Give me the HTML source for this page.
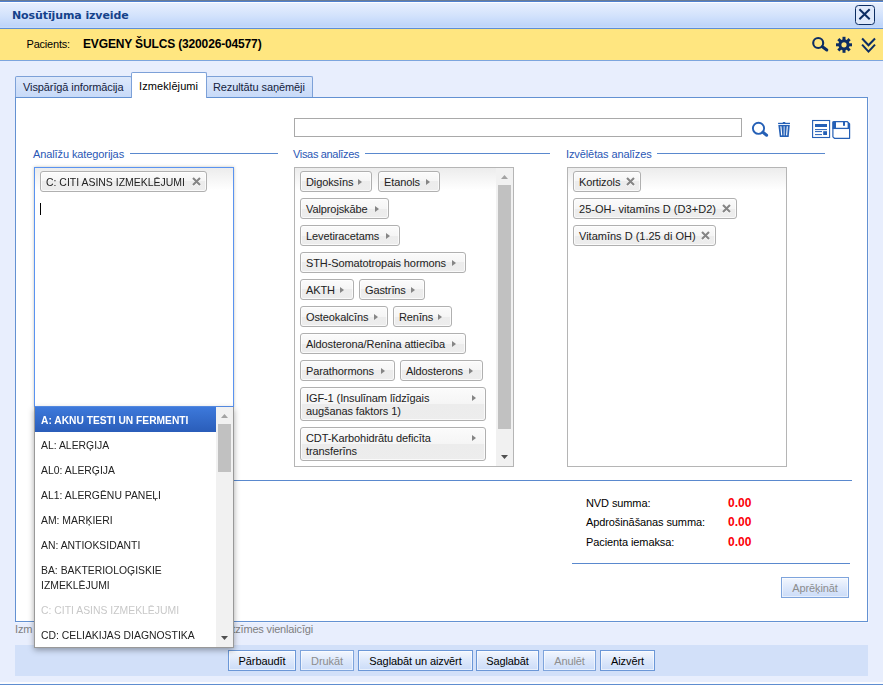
<!DOCTYPE html>
<html lang="lv">
<head>
<meta charset="utf-8">
<title>Nosūtījuma izveide</title>
<style>
*{box-sizing:border-box;margin:0;padding:0}
html,body{width:883px;height:685px;overflow:hidden}
body{position:relative;background:#e8eefd;font-family:"Liberation Sans",sans-serif;font-size:11px;color:#000;line-height:13px;letter-spacing:-0.1px}
.abs{position:absolute}
#topstrip{left:0;top:0;width:883px;height:2px;background:linear-gradient(#6a7b93 0,#6a7b93 50%,#4f80cf 50%,#4f80cf 100%)}
#titlebar{left:0;top:2px;width:883px;height:26px;background:linear-gradient(#fdfeff 0,#fdfeff 1px,#e7effe 1px,#d4e3fc 50%,#bed5fa 24px,#c9dcfb 26px)}
#titleline{left:0;top:28px;width:883px;height:1px;background:#5e8fd6}
#title{left:12px;top:9px;font-family:"DejaVu Sans","Liberation Sans",sans-serif;font-weight:bold;font-size:11px;color:#15428b;white-space:nowrap}
#closebtn{left:855px;top:5px;width:20px;height:20px;border:1.5px solid #0c2d63;border-radius:3.5px;background:#dfe9fb}
#patbar{left:0;top:29px;width:883px;height:31px;background:#ffe680}
#patline{left:0;top:60px;width:883px;height:1px;background:#7da5dd}
#patlabel{left:26.5px;top:38px;white-space:nowrap;letter-spacing:-0.2px}
#patname{left:83px;top:38px;font-weight:bold;font-size:12px;white-space:nowrap;letter-spacing:-0.15px}
.tab{position:absolute;top:76px;height:22px;border:1px solid #7da1d8;border-bottom:none;background:linear-gradient(#dde8fb,#c6d9f8);border-radius:2px 2px 0 0;white-space:nowrap;color:#15223d;padding:4px 0 0 7px}
.tab.active{top:72px;height:26px;background:#fff;color:#000;z-index:3;padding-top:7px;letter-spacing:.1px}
#tabbody{left:15px;top:97px;width:853px;height:525px;background:#fff;border:1px solid #6391d2;box-shadow:1px 1px 0 #f1f5fe}
.legend{position:absolute;color:#2a57b5;white-space:nowrap;font-size:11px}
.fline{position:absolute;height:1px;background:#5a89ce}
.box{position:absolute;background:linear-gradient(#ececec 0,#fff 22px);border:1px solid #b5b5b5}
.chip{position:absolute;height:21px;border:1px solid #b0b0b0;border-radius:3px;background:linear-gradient(#fbfbfb 0,#f5f5f5 50%,#ececec 50%,#ededed 100%);box-shadow:inset 0 0 0 1px rgba(255,255,255,.7);white-space:nowrap;padding:4px 0 0 5px;color:#222;font-size:11px}
.chip.tall{height:34px;white-space:normal}
.arr{position:absolute;width:0;height:0;border-left:4px solid #858585;border-top:3.5px solid transparent;border-bottom:3.5px solid transparent}
.x{position:absolute;width:9px;height:9px;top:5px;filter:drop-shadow(0 1px 0 rgba(255,255,255,.9))}
.btn{position:absolute;top:650px;height:21px;border:1px solid #6b97d7;background:linear-gradient(#f3f7fe,#dde8fb 50%,#cbdcf8);box-shadow:inset 0 0 0 1px rgba(255,255,255,.55);white-space:nowrap;text-align:center;padding-top:4px;color:#000}
.btn.dis{color:#8d8d8d;border-color:#7ea4dc}
.item{position:absolute;left:41px;white-space:nowrap;color:#222;letter-spacing:0;transform:scaleX(.945);transform-origin:0 0}
.sum{position:absolute;left:586px;white-space:nowrap}
.val{position:absolute;left:728px;color:#fb0007;font-weight:bold;font-size:12px;white-space:nowrap;letter-spacing:0}
</style>
</head>
<body>
<div id="topstrip" class="abs"></div>
<div id="titlebar" class="abs"></div>
<div id="titleline" class="abs"></div>
<div id="title" class="abs">Nosūtījuma izveide</div>
<div id="closebtn" class="abs">
<svg width="17" height="17" viewBox="0 0 17 17" style="position:absolute;left:0;top:0"><path d="M3.4 3.2 L13.7 13.3 M13.7 3.2 L3.4 13.3" stroke="#0c2d63" stroke-width="2" fill="none"/></svg>
</div>
<div id="patbar" class="abs"></div>
<div id="patline" class="abs"></div>
<svg class="abs" style="left:808px;top:34px" width="24" height="20" viewBox="0 0 24 20"><circle cx="10.2" cy="9" r="5" fill="none" stroke="#0c2d63" stroke-width="2.1"/><path d="M14.4 12.7 L18.8 16" stroke="#0c2d63" stroke-width="3" stroke-linecap="round"/></svg>
<svg class="abs" style="left:834px;top:35px" width="20" height="20" viewBox="-10 -9.8 20 20"><g fill="#0c2d63"><rect x="-1.5" y="-8" width="3" height="3.4" transform="rotate(0)"/><rect x="-1.5" y="-8" width="3" height="3.4" transform="rotate(45)"/><rect x="-1.5" y="-8" width="3" height="3.4" transform="rotate(90)"/><rect x="-1.5" y="-8" width="3" height="3.4" transform="rotate(135)"/><rect x="-1.5" y="-8" width="3" height="3.4" transform="rotate(180)"/><rect x="-1.5" y="-8" width="3" height="3.4" transform="rotate(225)"/><rect x="-1.5" y="-8" width="3" height="3.4" transform="rotate(270)"/><rect x="-1.5" y="-8" width="3" height="3.4" transform="rotate(315)"/></g><circle cx="0" cy="0" r="4.1" fill="none" stroke="#0c2d63" stroke-width="3"/></svg>
<svg class="abs" style="left:860px;top:36px" width="18" height="18" viewBox="0 0 18 18"><path d="M2.1 2.5 L8.5 9.3 L15 2.5 M2.1 8.6 L8.5 15.6 L15 8.6" fill="none" stroke="#0c2d63" stroke-width="2"/></svg>
<div id="patlabel" class="abs">Pacients:</div>
<div id="patname" class="abs">EVGENY ŠULCS (320026-04577)</div>

<div class="tab" style="left:15px;width:117px">Vispārīgā informācija</div>
<div class="tab active" style="left:131px;width:76px">Izmeklējumi</div>
<div class="tab" style="left:206px;width:107px;padding-left:6px">Rezultātu saņēmēji</div>
<div id="tabbody" class="abs"></div>

<!-- search row -->
<div class="abs" style="left:294px;top:118px;width:448px;height:19px;border:1px solid #a9a9a9;background:#fff"></div>
<svg class="abs" style="left:751px;top:120px" width="19" height="19" viewBox="0 0 19 19"><circle cx="7.5" cy="8.3" r="5.6" fill="none" stroke="#2560b6" stroke-width="1.9"/><path d="M11.9 12.3 L15.6 15.2" stroke="#2560b6" stroke-width="3" stroke-linecap="round"/></svg>
<svg class="abs" style="left:777px;top:120px" width="15" height="18" viewBox="0 0 15 18"><rect x="5.7" y="2" width="2.7" height="1.2" rx=".6" fill="#2560b6"/><rect x="1.1" y="2.8" width="11.9" height="1.3" fill="#2560b6"/><path d="M1.3 4.9 H12.8 L11.7 16.9 H2.8z" fill="#2560b6"/><path d="M3.9 6.2 L4.7 15.4 M10.3 6.2 L9.6 15.4" stroke="#fff" stroke-width="1.1"/><path d="M7.15 6.2 V15.4" stroke="#c9d8ee" stroke-width="1.1"/></svg>
<svg class="abs" style="left:811px;top:119px" width="20" height="20" viewBox="0 0 20 20"><rect x="1.6" y="1.5" width="17" height="17" fill="#fff" stroke="#2560b6" stroke-width="1.1"/><rect x="4" y="5" width="12" height="3" fill="#2560b6"/><rect x="4" y="10.1" width="12" height="1" fill="#2560b6"/><rect x="4" y="12.1" width="7" height="1" fill="#2560b6"/><rect x="4" y="15.1" width="7" height="1" fill="#2560b6"/><rect x="12.2" y="12.2" width="3.8" height="3.8" fill="#2560b6"/></svg>
<svg class="abs" style="left:831px;top:119px" width="20" height="21" viewBox="0 0 20 21"><path d="M1.9 3.6 Q1.9 2.6 2.9 2.6 H16.4 L18.6 4.8 V19.3 H3.4 L1.9 17.9z" fill="#fff" stroke="#2560b6" stroke-width="1.2" stroke-linejoin="round"/><path d="M1.6 2.6 H5 V9.3 H1.6z M16.6 3 L18.9 5 V9.3 H16.6z" fill="#2560b6"/><path d="M1.5 9.4 H19" stroke="#2560b6" stroke-width="1.3"/><rect x="12" y="3" width="2" height="3.8" fill="#2560b6"/></svg>

<!-- legends -->
<div class="legend" style="left:33px;top:148px">Analīžu kategorijas</div><div class="fline" style="left:130px;top:153px;width:148px"></div>
<div class="legend" style="left:293px;top:148px;letter-spacing:-0.33px">Visas analīzes</div><div class="fline" style="left:365px;top:153px;width:185px"></div>
<div class="legend" style="left:566px;top:148px">Izvēlētas analīzes</div><div class="fline" style="left:657px;top:153px;width:168px"></div>

<!-- box 1 -->
<div class="box" style="left:34px;top:167px;width:200px;height:240px;border-color:#5a93f0;box-shadow:0 0 3px rgba(110,110,90,.4)"></div>
<div class="chip" style="left:40px;top:171px;width:167px;letter-spacing:0"><span style="display:inline-block;transform:scaleX(.951);transform-origin:0 0">C: CITI ASINS IZMEKLĒJUMI</span><svg class="x" style="left:151px" viewBox="0 0 9 9"><path d="M1 1 L8 8 M8 1 L1 8" stroke="#858585" stroke-width="2.1"/></svg></div>
<div class="abs" style="left:40px;top:203px;width:1px;height:12px;background:#000"></div>

<!-- box 2 -->
<div class="box" style="left:294px;top:167px;width:220px;height:300px"></div>
<div class="chip" style="left:300px;top:171px;width:72px">Digoksīns<i class="arr" style="right:9px;top:7px"></i></div>
<div class="chip" style="left:378px;top:171px;width:62px">Etanols<i class="arr" style="right:9px;top:7px"></i></div>
<div class="chip" style="left:300px;top:198px;width:89px">Valprojskābe<i class="arr" style="right:9px;top:7px"></i></div>
<div class="chip" style="left:300px;top:225px;width:100px">Levetiracetams<i class="arr" style="right:9px;top:7px"></i></div>
<div class="chip" style="left:300px;top:252px;width:166px">STH-Somatotropais hormons<i class="arr" style="right:9px;top:7px"></i></div>
<div class="chip" style="left:300px;top:279px;width:54px">AKTH<i class="arr" style="right:9px;top:7px"></i></div>
<div class="chip" style="left:359px;top:279px;width:66px">Gastrīns<i class="arr" style="right:9px;top:7px"></i></div>
<div class="chip" style="left:300px;top:306px;width:88px">Osteokalcīns<i class="arr" style="right:9px;top:7px"></i></div>
<div class="chip" style="left:393px;top:306px;width:59px">Renīns<i class="arr" style="right:9px;top:7px"></i></div>
<div class="chip" style="left:300px;top:333px;width:166px">Aldosterona/Renīna attiecība<i class="arr" style="right:9px;top:7px"></i></div>
<div class="chip" style="left:300px;top:360px;width:95px">Parathormons<i class="arr" style="right:9px;top:7px"></i></div>
<div class="chip" style="left:400px;top:360px;width:83px">Aldosterons<i class="arr" style="right:9px;top:7px"></i></div>
<div class="chip tall" style="left:300px;top:387px;width:186px">IGF-1 (Insulīnam līdzīgais<br>augšanas faktors 1)<i class="arr" style="right:9px;top:7px"></i></div>
<div class="chip tall" style="left:300px;top:427px;width:186px">CDT-Karbohidrātu deficīta<br>transferīns<i class="arr" style="right:9px;top:7px"></i></div>
<!-- scrollbar box2 -->
<div class="abs" style="left:496px;top:168px;width:17px;height:298px;background:#f1f1f1"></div>
<div class="abs" style="left:498px;top:185px;width:13px;height:244px;background:#c1c1c1"></div>
<i class="abs" style="left:501px;top:175px;width:7px;height:4px;background:#a3a3a3;clip-path:polygon(0 100%,50% 0,100% 100%)"></i>
<i class="abs" style="left:501px;top:455px;width:7px;height:4px;background:#505050;clip-path:polygon(0 0,100% 0,50% 100%)"></i>

<!-- box 3 -->
<div class="box" style="left:567px;top:167px;width:220px;height:300px"></div>
<div class="chip" style="left:573px;top:171px;width:68px">Kortizols<svg class="x" style="left:52px" viewBox="0 0 9 9"><path d="M1 1 L8 8 M8 1 L1 8" stroke="#858585" stroke-width="2.1"/></svg></div>
<div class="chip" style="left:573px;top:198px;width:164px;letter-spacing:.04px">25-OH- vitamīns D (D3+D2)<svg class="x" style="left:148px" viewBox="0 0 9 9"><path d="M1 1 L8 8 M8 1 L1 8" stroke="#858585" stroke-width="2.1"/></svg></div>
<div class="chip" style="left:573px;top:225px;width:143px;letter-spacing:0">Vitamīns D (1.25 di OH)<svg class="x" style="left:127px" viewBox="0 0 9 9"><path d="M1 1 L8 8 M8 1 L1 8" stroke="#858585" stroke-width="2.1"/></svg></div>

<!-- sums -->
<div class="fline" style="left:36px;top:480px;width:816px"></div>
<div class="sum" style="top:497px">NVD summa:</div><div class="val" style="top:497px">0.00</div>
<div class="sum" style="top:516px">Apdrošināšanas summa:</div><div class="val" style="top:516px">0.00</div>
<div class="sum" style="top:536px">Pacienta iemaksa:</div><div class="val" style="top:536px">0.00</div>
<div class="fline" style="left:572px;top:563px;width:278px"></div>
<div class="btn dis" style="left:781px;top:577px;width:68px;height:21px">Aprēķināt</div>

<!-- status + buttons -->
<div class="abs" style="left:15px;top:623px;color:#7f7f7f;white-space:nowrap">Izm</div>
<div class="abs" style="left:14px;width:299px;text-align:right;top:623px;color:#7f7f7f;white-space:nowrap;letter-spacing:-0.17px">eklējumiem var pievienot vairākas atzīmes vienlaicīgi</div>
<div class="abs" style="left:15px;top:645px;width:853px;height:31px;background:#d2e0f9"></div>
<div class="btn" style="left:228px;width:68px">Pārbaudīt</div>
<div class="btn dis" style="left:300px;width:54px">Drukāt</div>
<div class="btn" style="left:358px;width:115px">Saglabāt un aizvērt</div>
<div class="btn" style="left:476px;width:63px">Saglabāt</div>
<div class="btn dis" style="left:543px;width:53px">Anulēt</div>
<div class="btn" style="left:600px;width:55px">Aizvērt</div>
<div class="abs" style="left:0;top:682px;width:883px;height:2px;background:#fbfcff"></div>
<div class="abs" style="left:0;top:684px;width:883px;height:1px;background:#5e8dd0"></div>

<!-- dropdown -->
<div class="abs" style="left:34px;top:407px;width:200px;height:241px;background:#fff;border:1px solid #999;border-top:none;box-shadow:0 2px 6px rgba(0,0,0,.35);z-index:10;overflow:hidden">
 <div class="abs" style="left:0;top:0;width:181px;height:25px;background:linear-gradient(#3d79db,#2a5db9)"></div>
 <div class="abs" style="left:181px;top:0;width:17px;height:241px;background:#f1f1f1"></div>
 <div class="abs" style="left:183px;top:17px;width:13px;height:48px;background:#c1c1c1"></div>
 <i class="abs" style="left:186px;top:7px;width:7px;height:4px;background:#a3a3a3;clip-path:polygon(0 100%,50% 0,100% 100%)"></i>
 <i class="abs" style="left:186px;top:229px;width:7px;height:4px;background:#505050;clip-path:polygon(0 0,100% 0,50% 100%)"></i>
 <div class="item" style="left:6px;top:7px;color:#fff;font-weight:bold;transform:scaleX(.93)">A: AKNU TESTI UN FERMENTI</div>
 <div class="item" style="left:6px;top:32px">AL: ALERĢIJA</div>
 <div class="item" style="left:6px;top:57px">AL0: ALERĢIJA</div>
 <div class="item" style="left:6px;top:82px">AL1: ALERGĒNU PANEĻI</div>
 <div class="item" style="left:6px;top:107px">AM: MARĶIERI</div>
 <div class="item" style="left:6px;top:132px">AN: ANTIOKSIDANTI</div>
 <div class="item" style="left:6px;top:156px;line-height:15px">BA: BAKTERIOLOĢISKIE<br>IZMEKLĒJUMI</div>
 <div class="item" style="left:6px;top:197px;color:#c8c8c8">C: CITI ASINS IZMEKLĒJUMI</div>
 <div class="item" style="left:6px;top:222px">CD: CELIAKIJAS DIAGNOSTIKA</div>
</div>

</body>
</html>
